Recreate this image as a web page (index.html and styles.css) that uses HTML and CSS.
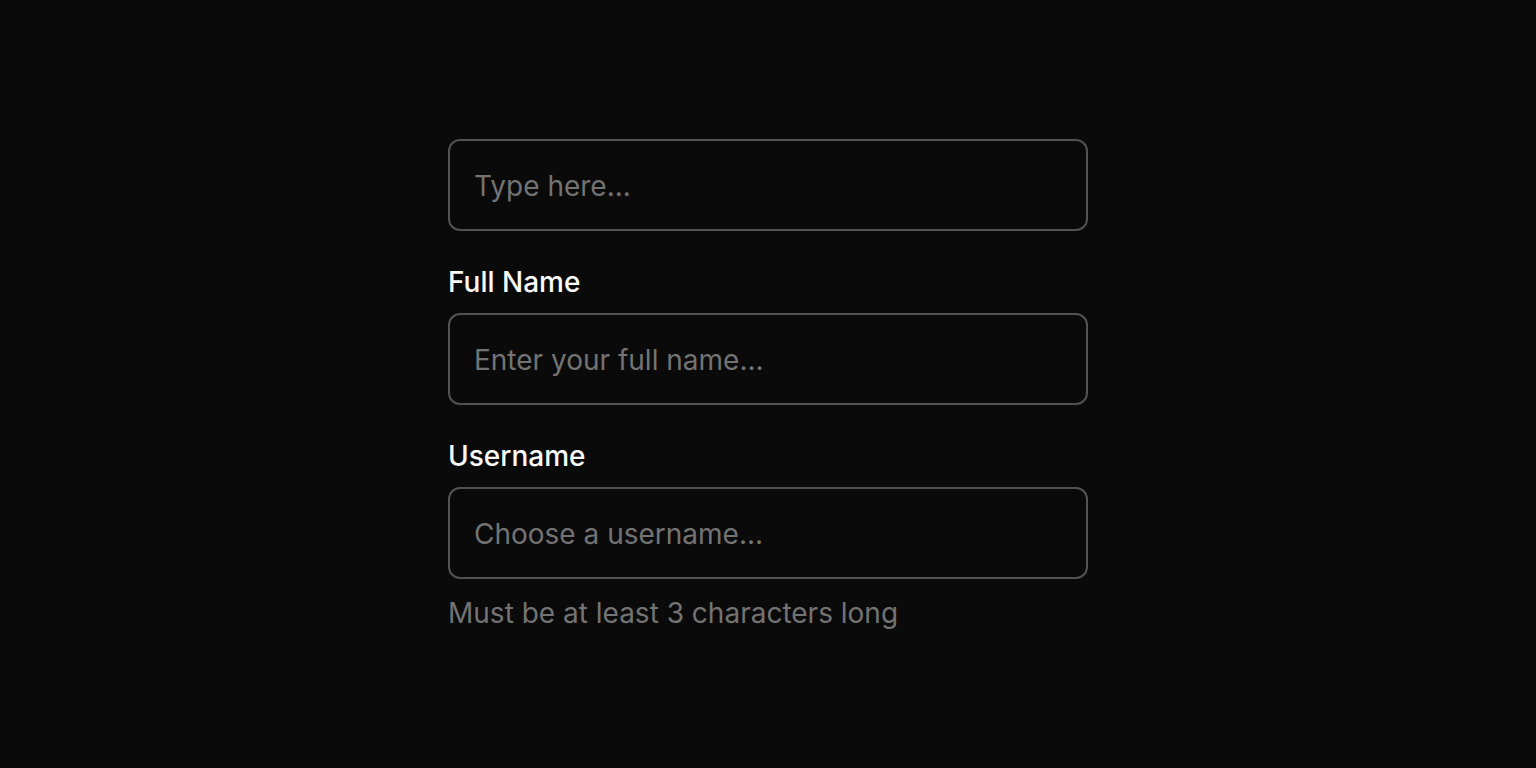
FILE: index.html
```html
<!DOCTYPE html>
<html lang="en">
<head>
<meta charset="utf-8">
<title>Inputs</title>
<link rel="stylesheet" href="styles.css">
</head>
<body>
<main class="page">
  <div class="form">
    <div class="field">
      <input class="input" type="text" placeholder="Type here...">
    </div>
    <div class="field">
      <label class="label" for="fullname">Full Name</label>
      <input class="input" id="fullname" type="text" placeholder="Enter your full name...">
    </div>
    <div class="field">
      <label class="label" for="username">Username</label>
      <input class="input" id="username" type="text" placeholder="Choose a username...">
      <p class="hint">Must be at least 3 characters long</p>
    </div>
  </div>
</main>
</body>
</html>
```

FILE: styles.css
```css
* { box-sizing: border-box; }
html, body {
  margin: 0;
  padding: 0;
  background: #0a0a0a;
  font-family: Inter, "Noto Sans", sans-serif;
}
.page {
  min-height: 100vh;
  padding-top: 2px;
  display: flex;
  align-items: center;
  justify-content: center;
}
.form {
  width: 640px;
  display: flex;
  flex-direction: column;
  gap: 32px;
}
.field {
  display: flex;
  flex-direction: column;
}
.label {
  color: #fafafa;
  font-size: 28px;
  font-weight: 500;
  line-height: 36px;
  margin-top: 1px;
  margin-bottom: 13px;
}
.input {
  width: 100%;
  height: 92px;
  border: 2px solid #525252;
  border-radius: 12px;
  background: transparent;
  padding: 2px 24px 0;
  font-family: inherit;
  font-size: 28px;
  color: #fafafa;
  outline: none;
}
.input::placeholder {
  color: #737373;
}
.hint {
  margin: 16px 0 0;
  color: #737373;
  font-size: 28px;
  line-height: 36px;
}
```
